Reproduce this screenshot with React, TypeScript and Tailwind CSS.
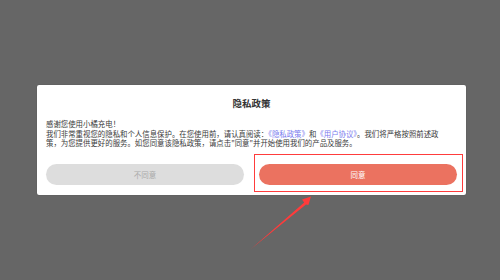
import React from "react";

export default function App() {
  const font = { fontFamily: '"Noto Sans CJK SC", "Noto Sans", sans-serif' };
  return (
    <div
      className="relative w-[500px] h-[280px] bg-[#666666] flex items-center justify-center overflow-hidden"
      style={font}
    >
      <div className="ml-[3px] w-[429px] h-[110px] bg-white rounded-[2px] px-[9px] flex flex-col shadow-[0_0_1px_rgba(0,0,0,0.4)]">
        <div className="pt-[12px] h-[24px] text-center text-[9.5px] leading-[12px] font-bold text-[#333333]">
          隐私政策
        </div>
        <div className="mt-[10px] text-[7.42px] leading-[9.5px] text-[#3a3a3a] whitespace-nowrap">
          <div>感谢您使用小橘充电！</div>
          <div>
            我们非常重视您的隐私和个人信息保护。在您使用前，请认真阅读：
            <span className="text-[#7a7aee]">《隐私政策》</span>和
            <span className="text-[#7a7aee]">《用户协议》</span>
            。我们将严格按照前述政
          </div>
          <div>策，为您提供更好的服务。如您同意该隐私政策，请点击"同意"并开始使用我们的产品及服务。</div>
        </div>
        <div className="mt-[16.5px] flex gap-[15px]">
          <div className="flex-1 h-[21px] rounded-full bg-[#dddddd] flex items-center justify-center text-[7.5px] text-[#aaaaaa]">
            不同意
          </div>
          <div className="relative flex-1 h-[21px]">
            <div className="h-full rounded-full bg-[#eb7260] flex items-center justify-center text-[7.5px] text-white">
              同意
            </div>
            <div className="absolute left-[-5px] right-[-6px] top-[-10px] bottom-[-7px] border-[1.5px] border-[#ff3c3c]" />
          </div>
        </div>
      </div>
      <svg className="absolute left-0 top-0" width="500" height="280" viewBox="0 0 500 280">
        <polygon
          points="251,249 304.2,202.6 302,199.6 311,196.6 308.4,205 306,204.4"
          fill="#ff3b3b"
        />
      </svg>
    </div>
  );
}
